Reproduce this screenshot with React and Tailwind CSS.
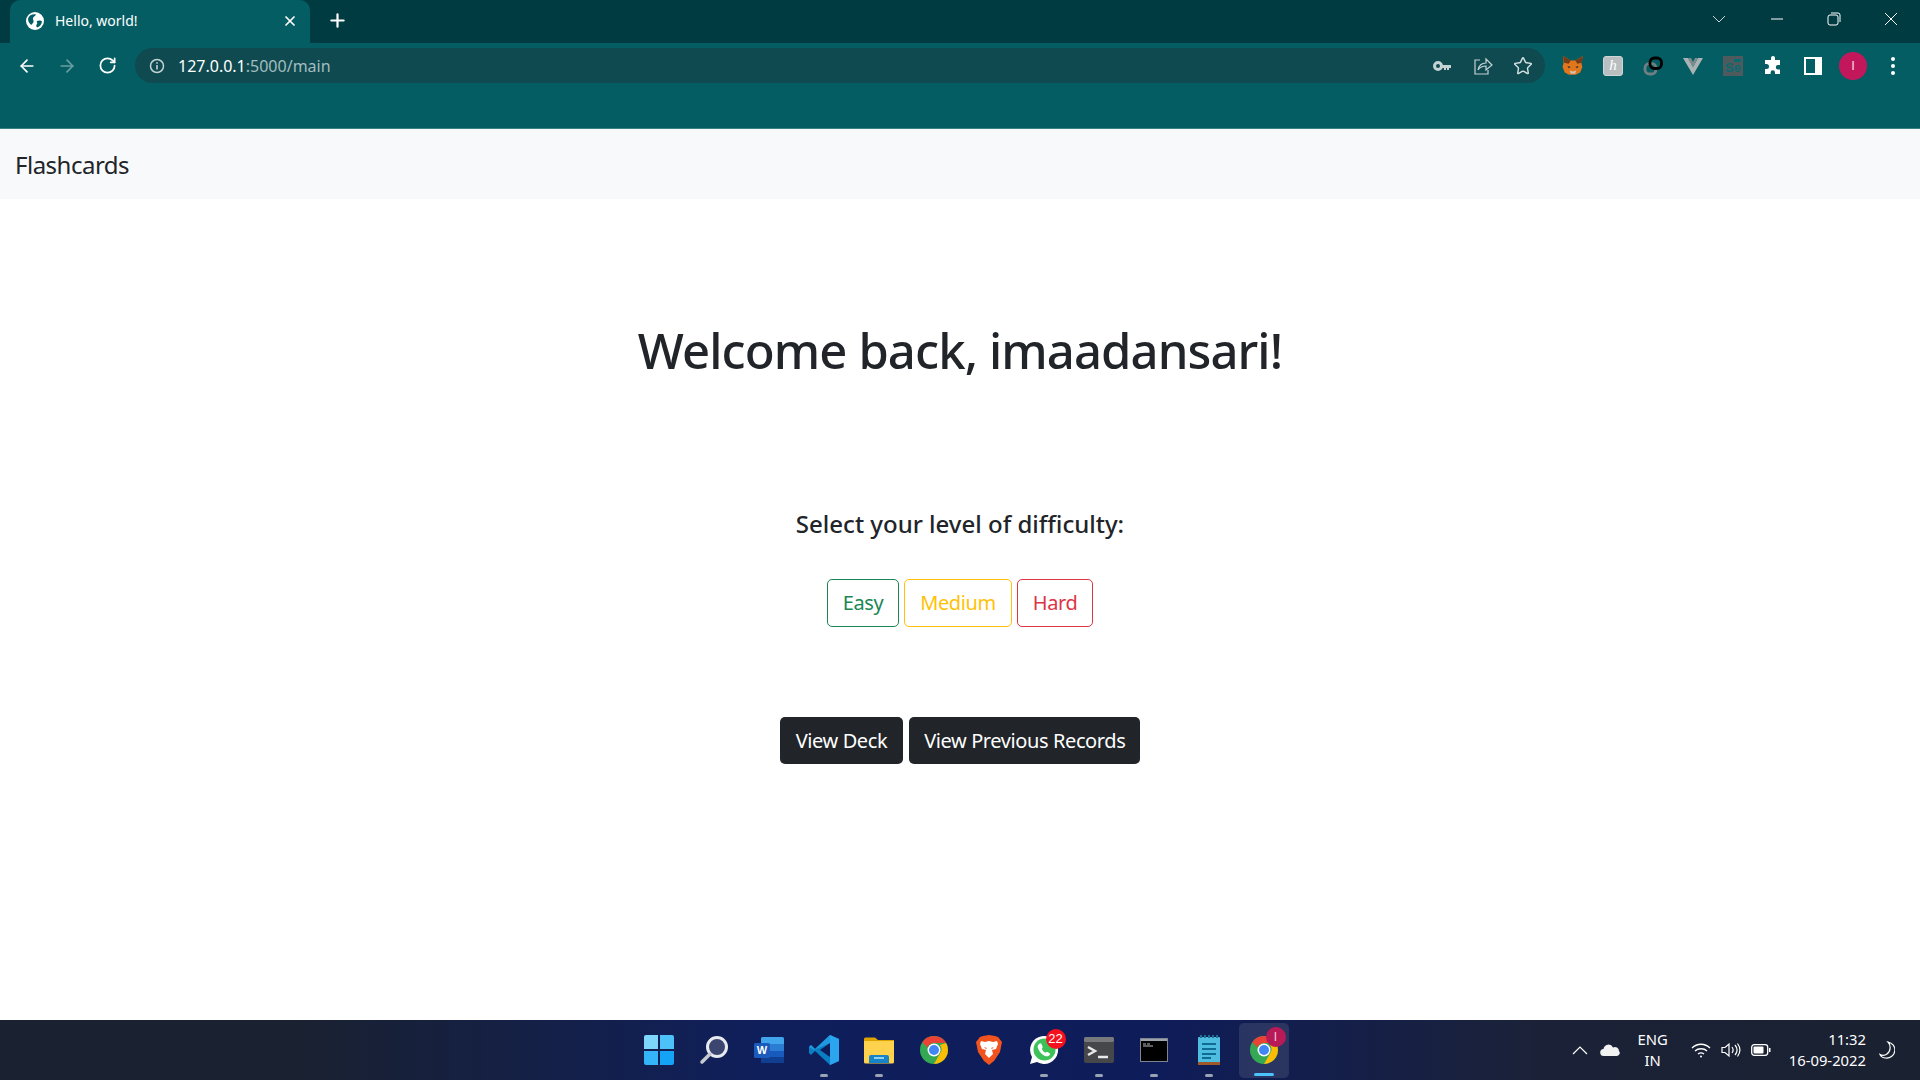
import { ArrowLeft, ArrowRight, RotateCw, Star, X, Plus } from 'lucide-react';

const TASK_DOT = 'absolute bottom-[3px] left-1/2 -translate-x-1/2 w-[8px] h-[3px] rounded-full bg-[#9aa3b5]';

function Globe() {
  return (
    <svg width="18" height="18" viewBox="0 0 18 18">
      <circle cx="9" cy="9" r="9" fill="#fff" />
      <path d="M4 3.500C6 2.500 8 2 10 2.500 9.500 4 7.500 4.500 7 6s1 2.500.5 4-1.500 1.500-2 3C3.500 12 2 9 2 7c.500-1.500 1-2.500 2-3.500zM11 9c2-1 4-.5 5 .5-.5 3-2.500 5.500-5 6-1-1.500-1-2.500 0-3.500s-1-2 0-3z" fill="#045d63" />
    </svg>
  );
}

function Fox() {
  return (
    <svg width="22" height="22" viewBox="0 0 20 20">
      <path d="M1 1l7 4h4l7-4-1.500 6 1 4-2 5-4 2h-6l-4-2-2-5 1-4z" fill="#e2761b" />
      <path d="M1 1l7 4-2 3-4-1zM19 1l-7 4 2 3 4-1z" fill="#763d16" />
      <path d="M7 14l3 1 3-1-1 3H8z" fill="#d7c1b3" />
      <path d="M5 10l3 1-2 1zM15 10l-3 1 2 1z" fill="#233447" />
    </svg>
  );
}

function Ext({ children }) {
  return <div className="w-[40px] h-[35px] flex items-center justify-center shrink-0">{children}</div>;
}

function BrowserChrome() {
  return (
    <div className="h-[129px] bg-[#045d63] shrink-0 flex flex-col border-b border-[#3a8087]">
      {/* tab strip */}
      <div className="h-[43px] bg-[#003b42] flex items-end pl-[10px] shrink-0">
        <div className="w-[300px] h-[43px] bg-[#045d63] rounded-t-[10px] flex items-center pl-[16px] pr-[12px] pb-[2px] text-white">
          <Globe />
          <span className="ml-[11px] text-[14px] flex-1">Hello, world!</span>
          <X size={16} strokeWidth={2.6} />
        </div>
        <div className="h-[43px] w-[44px] ml-[5px] pb-[2px] flex items-center justify-center text-white">
          <Plus size={21} strokeWidth={2.5} />
        </div>
        <div className="flex-1" />
        <div className="h-[38px] flex items-center text-white self-start">
          <svg width="14" height="8" viewBox="0 0 14 8" className="mr-[44px] opacity-80"><path d="M1 1l6 6 6-6" fill="none" stroke="#fff" /></svg>
          <svg width="14" height="14" viewBox="0 0 14 14" className="mr-[43px]"><path d="M1 7h12" stroke="#fff" /></svg>
          <svg width="14" height="14" viewBox="0 0 14 14" className="mr-[43px]"><rect x="1" y="3" width="10" height="10" rx="2" fill="none" stroke="#fff" /><path d="M4 1h7a2 2 0 0 1 2 2v7" fill="none" stroke="#fff" /></svg>
          <svg width="14" height="14" viewBox="0 0 14 14" className="mr-[22px]"><path d="M1 1l12 12M13 1L1 13" stroke="#fff" /></svg>
        </div>
      </div>

      {/* toolbar */}
      <div className="h-[35px] mt-[5px] flex items-center text-white shrink-0">
        <div className="w-[135px] flex items-center pl-[17px] shrink-0">
          <ArrowLeft size={20} strokeWidth={2} />
          <ArrowRight size={20} strokeWidth={2} className="ml-[20px] opacity-40" />
          <RotateCw size={19} strokeWidth={2.2} className="ml-[21px]" />
        </div>
        <div className="w-[1410px] h-[35px] bg-[#0f4a50] rounded-full flex items-center pl-[14px] pr-[12px] shrink-0">
          <svg width="16" height="16" viewBox="0 0 16 16" className="shrink-0">
            <circle cx="8" cy="8" r="6.500" fill="none" stroke="#c4d2d4" strokeWidth="1.500" />
            <path d="M8 7v4.500M8 4.300v1.500" stroke="#c4d2d4" strokeWidth="1.600" />
          </svg>
          <span className="ml-[13px] text-[16px] text-white">127.0.0.1<span className="text-[#a3bdbf]">:5000/main</span></span>
          <div className="flex-1" />
          <svg width="18" height="12" viewBox="0 0 18 12" className="mr-[22px]">
            <circle cx="5" cy="6" r="3.500" fill="none" stroke="#c4d2d4" strokeWidth="3" />
            <path d="M8 5h10v3h-2v2h-2V8h-1v2h-2V8H8z" fill="#c4d2d4" />
          </svg>
          <svg width="20" height="20" viewBox="0 0 20 20" className="mr-[20px]" fill="none" stroke="#c4d2d4" strokeWidth="1.200">
            <path d="M7 4H2v14h13v-4" />
            <path d="M5 14c1-5 4-7 8-7V3l6 6-6 5v-4c-3 0-6 1-8 4z" />
          </svg>
          <Star size={20} strokeWidth={1.700} color="#d5e0e1" />
        </div>
        <div className="ml-[8px] flex items-center">
          <Ext><Fox /></Ext>
          <Ext>
            <div className="w-[20px] h-[20px] rounded-[3px] bg-[#b9bfc0] border border-[#d0d4d4] flex items-center justify-center font-['Liberation_Serif',serif] italic text-[15px] text-white">h</div>
          </Ext>
          <Ext>
            <svg width="20" height="20" viewBox="0 0 20 20" fill="none" strokeWidth="2.800">
              <rect x="2" y="7.500" width="11" height="10.500" rx="4.500" stroke="#6f8083" />
              <rect x="7" y="2" width="11.500" height="10.500" rx="4.500" stroke="#000" />
            </svg>
          </Ext>
          <Ext>
            <svg width="20" height="18" viewBox="0 0 20 18">
              <path d="M0 1h5l5 9 5-9h5L10 18z" fill="#a9b3b4" />
              <path d="M5 1h3l2 4 2-4h3l-5 9z" fill="#7e8c8e" />
            </svg>
          </Ext>
          <Ext>
            <div className="relative w-[20px] h-[20px] bg-[#4f5a5c] flex items-end justify-center text-[#0a6a72] text-[13px] font-bold leading-[17px] font-['Liberation_Sans',sans-serif]">
              Se
              <span className="absolute top-[3px] right-[2px] w-[7px] h-[3px] bg-[#0a6a72]" />
            </div>
          </Ext>
          <Ext>
            <svg width="20" height="20" viewBox="0 0 20 20" fill="#fff">
              <path d="M8 2a2 2 0 0 1 4 0v2h5v5h-2a2.200 2.200 0 0 0 0 4.400h2V18h-5v-1.500a2.200 2.200 0 0 0-4.400 0V18H2v-5h1.500a2.500 2.500 0 0 0 0-5H2V4h6z" />
            </svg>
          </Ext>
          <Ext>
            <svg width="18" height="18" viewBox="0 0 18 18">
              <rect x="1" y="1" width="16" height="16" fill="none" stroke="#fff" strokeWidth="2" />
              <rect x="11" y="1" width="6" height="16" fill="#fff" />
            </svg>
          </Ext>
          <Ext>
            <div className="w-[28px] h-[28px] rounded-full bg-[#c2185b] flex items-center justify-center text-[#f8d7e5] text-[13px] font-['Liberation_Sans',sans-serif]">I</div>
          </Ext>
          <Ext>
            <div className="flex flex-col gap-[3px]">
              <span className="w-[4px] h-[4px] rounded-full bg-white" />
              <span className="w-[4px] h-[4px] rounded-full bg-white" />
              <span className="w-[4px] h-[4px] rounded-full bg-white" />
            </div>
          </Ext>
        </div>
      </div>
    </div>
  );
}

function Chrome() {
  return (
    <svg width="28" height="28" viewBox="0 0 28 28">
      <circle cx="14" cy="14" r="14" fill="#34a853" />
      <path d="M14 0a14 14 0 0 1 12.100 7H14a7 7 0 0 0-6.500 4.500L2.300 6.200A14 14 0 0 1 14 0z" fill="#ea4335" />
      <path d="M26.100 7A14 14 0 0 1 14 28l6-10.500A7 7 0 0 0 20 9z" fill="#fbbc04" />
      <circle cx="14" cy="14" r="6.500" fill="#fff" />
      <circle cx="14" cy="14" r="5" fill="#4285f4" />
    </svg>
  );
}

function TaskIcon({ children, dot }) {
  return (
    <div className="relative w-[55px] h-[60px] flex items-center justify-center shrink-0">
      {children}
      {dot && <span className={TASK_DOT} />}
    </div>
  );
}

function Taskbar() {
  return (
    <div className="h-[60px] shrink-0 grid grid-cols-[1fr_660px_1fr] bg-[linear-gradient(90deg,#1a2130_0%,#1a2130_15%,#0f1f5c_40%,#0e1c5a_60%,#1b2238_80%,#1a2130_100%)] text-white">
      <div />
      <div className="flex items-center ml-[1px]">
        <TaskIcon>
          <div className="grid grid-cols-2 gap-[2px] w-[30px] h-[30px]">
            <span className="bg-[#7fd6fb] rounded-tl-[2px]" />
            <span className="bg-[#4cc2f8] rounded-tr-[2px]" />
            <span className="bg-[#33b5f7] rounded-bl-[2px]" />
            <span className="bg-[#15a4f5] rounded-br-[2px]" />
          </div>
        </TaskIcon>
        <TaskIcon>
          <svg width="30" height="30" viewBox="0 0 30 30" fill="none">
            <circle cx="18" cy="12" r="9.500" fill="#3b4570" stroke="#e8ecef" strokeWidth="3" />
            <path d="M11 19l-8 8" stroke="#c7cbd0" strokeWidth="3.500" strokeLinecap="round" />
          </svg>
        </TaskIcon>
        <TaskIcon>
          <svg width="30" height="28" viewBox="0 0 30 28">
            <rect x="7" y="1" width="23" height="26" rx="1.500" fill="#41a5ee" />
            <rect x="7" y="8" width="23" height="7" fill="#2b7cd3" />
            <rect x="7" y="15" width="23" height="6" fill="#185abd" />
            <rect x="7" y="21" width="23" height="6" fill="#103f91" />
            <rect x="0" y="7" width="16" height="15" rx="1.500" fill="#1a5bbd" />
            <text x="8" y="18" textAnchor="middle" fontSize="11" fontWeight="700" fill="#fff" fontFamily="Liberation Sans">W</text>
          </svg>
        </TaskIcon>
        <TaskIcon dot>
          <svg width="30" height="30" viewBox="0 0 30 30">
            <path d="M21 0l9 4v22l-9 4L6 16 2 20 0 18v-6l2-2 4 4z" fill="#0a7ec2" />
            <path d="M21 0l9 4v22l-9 4z" fill="#2aa5ee" />
            <path d="M21 8v14l-10-7z" fill="#0e1c5a" />
            <path d="M21 0L6 14l-4-4-2 2 5 3L21 8z" fill="#1f9ae0" />
          </svg>
        </TaskIcon>
        <TaskIcon dot>
          <svg width="30" height="28" viewBox="0 0 30 28">
            <path d="M0 3a1.500 1.500 0 0 1 1.500-1.500H11L14 4h16v6H0z" fill="#e0a400" />
            <path d="M0 5h30v21a1.500 1.500 0 0 1-1.500 1.500h-27A1.500 1.500 0 0 1 0 26z" fill="#ffd24d" />
            <path d="M5 26v-5a2 2 0 0 1 2-2h16a2 2 0 0 1 2 2v6H5z" fill="#1784c9" />
            <rect x="10" y="21" width="10" height="2" fill="#8fd0f2" />
          </svg>
        </TaskIcon>
        <TaskIcon><Chrome /></TaskIcon>
        <TaskIcon>
          <svg width="26" height="30" viewBox="0 0 26 30">
            <path d="M13 0l6 1 3 1 4 5-2 10-6 9-5 4-5-4-6-9L0 7l4-5 3-1z" fill="#f1531f" />
            <path d="M13 6l4 1 4-1 1 3-2 5-4 1 1 4-4 4-4-4 1-4-4-1-2-5 1-3 4 1z" fill="#fff" />
            <path d="M8 12l3 1-1 1zM18 12l-3 1 1 1z" fill="#f1531f" />
          </svg>
        </TaskIcon>
        <TaskIcon dot>
          <div className="relative">
            <svg width="30" height="30" viewBox="0 0 30 30">
              <path d="M1 29l2-7A14 14 0 1 1 8 27z" fill="#fff" />
              <circle cx="15.500" cy="14.500" r="11" fill="#3dc25a" />
              <path d="M10 9c2-2 3 1 3.500 2.500s-1 2-.5 3 2 2.500 3 3 1.500-1 2.500-.5 3 1.500 2.500 2.500-2.500 2.500-5 1.500-5-3.500-6.500-6.500S8.500 10.500 10 9z" fill="#fff" />
            </svg>
            <span className="absolute -top-[6px] -right-[7px] w-[20px] h-[20px] rounded-full bg-[#f4101c] text-white text-[13px] leading-[20px] text-center font-['Liberation_Sans',sans-serif]">22</span>
          </div>
        </TaskIcon>
        <TaskIcon dot>
          <svg width="30" height="26" viewBox="0 0 30 26">
            <rect width="30" height="26" rx="2" fill="#45474a" />
            <rect width="30" height="5" rx="1.500" fill="#77797c" />
            <path d="M4 10l7 4-7 4" fill="none" stroke="#e8e8e8" strokeWidth="2.500" />
            <path d="M14 20h10" stroke="#e8e8e8" strokeWidth="2.500" />
          </svg>
        </TaskIcon>
        <TaskIcon dot>
          <svg width="28" height="24" viewBox="0 0 28 24">
            <rect x="0.500" y="0.500" width="27" height="23" fill="#000" stroke="#7f8590" />
            <rect x="1" y="1" width="26" height="2" fill="#9da3ad" />
            <path d="M3 6h3M7 6h3M3 8h10" stroke="#b8bcc2" />
          </svg>
        </TaskIcon>
        <TaskIcon dot>
          <svg width="22" height="30" viewBox="0 0 22 30">
            <rect y="2" width="22" height="27" rx="1" fill="#4fbde0" />
            <rect y="27" width="22" height="3" fill="#a0582a" />
            <path d="M2 1.500h18" stroke="#1d6f96" strokeWidth="3" strokeDasharray="2 2" />
            <path d="M4 9h14M4 14h14M4 19h14M4 23h9" stroke="#0f6b92" strokeWidth="2" />
          </svg>
        </TaskIcon>
        <div className="relative w-[50px] h-[55px] mx-[2.500px] flex items-center justify-center rounded-[5px] bg-white/10 shrink-0">
          <Chrome />
          <span className="absolute top-[4px] right-[3px] w-[20px] h-[20px] rounded-full bg-[#b81a58] text-[#f3c8d8] text-[12px] leading-[20px] text-center font-['Liberation_Sans',sans-serif]">I</span>
          <span className="absolute bottom-[2px] left-1/2 -translate-x-1/2 w-[20px] h-[3px] rounded-full bg-[#4cc2ff]" />
        </div>
      </div>

      {/* system tray */}
      <div className="flex items-center justify-end pr-[25px] text-[14.800px]">
        <svg width="16" height="10" viewBox="0 0 16 10" className="mr-[12px]"><path d="M1 9l7-7 7 7" fill="none" stroke="#fff" strokeWidth="1.200" /></svg>
        <svg width="20" height="14" viewBox="0 0 20 14" className="mr-[18px]">
          <path d="M4 13a3.500 3.500 0 0 1-.5-7A5 5 0 0 1 13 4.500 4 4 0 0 1 19 8a3 3 0 0 1-2 5z" fill="#f2f2f2" />
        </svg>
        <div className="text-center leading-[21px] mr-[23px]">
          <div>ENG</div>
          <div>IN</div>
        </div>
        <svg width="20" height="16" viewBox="0 0 20 16" fill="none" stroke="#fff" strokeWidth="1.300" className="mr-[10px]">
          <path d="M1 6c5-5 13-5 18 0M4 9c3-3 9-3 12 0M7 12c2-1.500 4-1.500 6 0" />
          <circle cx="10" cy="14.500" r="1" fill="#fff" stroke="none" />
        </svg>
        <svg width="20" height="16" viewBox="0 0 20 16" fill="none" stroke="#fff" strokeWidth="1.200" className="mr-[10px]">
          <path d="M1 5.500h3L8 2v12l-4-3.500H1z" />
          <path d="M11 5c1.500 2 1.500 4 0 6M14 3c2.500 3 2.500 7 0 10M16.500 1.500c3 4 3 9 0 13" />
        </svg>
        <svg width="20" height="12" viewBox="0 0 20 12" className="mr-[18px]">
          <rect x="0.700" y="0.700" width="16" height="10.600" rx="2.500" fill="none" stroke="#fff" strokeWidth="1.300" />
          <rect x="2.500" y="2.500" width="10" height="7" rx="1" fill="#fff" />
          <rect x="18" y="4" width="1.500" height="4" fill="#fff" />
        </svg>
        <div className="text-right leading-[21px] mr-[13px]">
          <div>11:32</div>
          <div>16-09-2022</div>
        </div>
        <svg width="16" height="18" viewBox="0 0 16 18" fill="none" stroke="#fff" strokeWidth="1.200">
          <path d="M9 1c3 3 3 9-1 12-2 1.500-5 1.500-7 .5 1 2 3 3.500 5.500 3.500A7.500 7.500 0 0 0 9 1z" />
        </svg>
      </div>
    </div>
  );
}

export default function App() {
  return (
    <div className="h-screen flex flex-col bg-white overflow-hidden font-['Noto_Sans',sans-serif] text-[#212529]">
      <BrowserChrome />

      <nav className="h-[70px] bg-[#f8f9fa] flex items-center px-[15px] shrink-0">
        <a className="text-[24px] tracking-[-0.5px] pt-[2px]">Flashcards</a>
      </nav>

      <main className="flex-1 flex flex-col items-center">
        <h1 className="mt-[116px] text-[49px] leading-[70px] font-medium tracking-[-0.9px]">Welcome back, imaadansari!</h1>
        <h2 className="mt-[125px] text-[24px] leading-[28px] font-medium">Select your level of difficulty:</h2>
        <div className="mt-[41px] flex gap-[5px]">
          <button className="h-[48px] px-[15px] text-[20px] rounded-[5px] border border-[#198754] text-[#198754] tracking-[-0.4px]">Easy</button>
          <button className="h-[48px] px-[15px] text-[20px] rounded-[5px] border border-[#ffc107] text-[#ffc107] tracking-[-0.4px]">Medium</button>
          <button className="h-[48px] px-[15px] text-[20px] rounded-[5px] border border-[#dc3545] text-[#dc3545] tracking-[-0.4px]">Hard</button>
        </div>
        <div className="mt-[90px] flex gap-[6px]">
          <button className="h-[47px] px-[16px] text-[20px] rounded-[5px] bg-[#212529] text-white tracking-[-0.4px]">View Deck</button>
          <button className="h-[47px] px-[15px] text-[20px] rounded-[5px] bg-[#212529] text-white tracking-[-0.4px]">View Previous Records</button>
        </div>
      </main>

      <Taskbar />
    </div>
  );
}
